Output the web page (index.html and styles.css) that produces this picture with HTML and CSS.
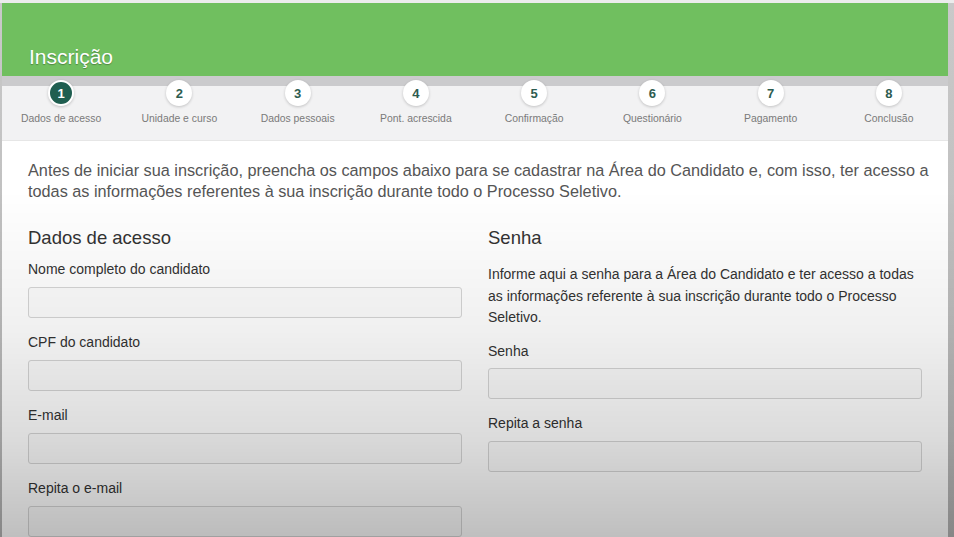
FILE: index.html
```html
<!DOCTYPE html>
<html lang="pt-BR">
<head>
<meta charset="utf-8">
<title>Inscrição</title>
<link rel="stylesheet" href="styles.css">
</head>
<body>
<div class="panel">
  <header class="top">
    <h1 class="title">Inscrição</h1>
  </header>
  <nav class="steps">
    <div class="step active"><span class="dot">1</span><span class="step-label">Dados de acesso</span></div>
    <div class="step"><span class="dot">2</span><span class="step-label">Unidade e curso</span></div>
    <div class="step"><span class="dot">3</span><span class="step-label">Dados pessoais</span></div>
    <div class="step"><span class="dot">4</span><span class="step-label">Pont. acrescida</span></div>
    <div class="step"><span class="dot">5</span><span class="step-label">Confirmação</span></div>
    <div class="step"><span class="dot">6</span><span class="step-label">Questionário</span></div>
    <div class="step"><span class="dot">7</span><span class="step-label">Pagamento</span></div>
    <div class="step"><span class="dot">8</span><span class="step-label">Conclusão</span></div>
  </nav>
  <main class="content">
    <p class="intro">Antes de iniciar sua inscrição, preencha os campos abaixo para se cadastrar na Área do Candidato e, com isso, ter acesso a todas as informações referentes à sua inscrição durante todo o Processo Seletivo.</p>
    <div class="cols">
      <section class="col">
        <h2 class="col-title">Dados de acesso</h2>
        <div class="field"><label class="label">Nome completo do candidato</label><input class="input" type="text"></div>
        <div class="field"><label class="label">CPF do candidato</label><input class="input" type="text"></div>
        <div class="field"><label class="label">E-mail</label><input class="input" type="text"></div>
        <div class="field"><label class="label">Repita o e-mail</label><input class="input" type="text"></div>
      </section>
      <section class="col">
        <h2 class="col-title">Senha</h2>
        <p class="note">Informe aqui a senha para a Área do Candidato e ter acesso a todas as informações referente à sua inscrição durante todo o Processo Seletivo.</p>
        <div class="field"><label class="label">Senha</label><input class="input" type="password"></div>
        <div class="field"><label class="label">Repita a senha</label><input class="input" type="password"></div>
      </section>
    </div>
  </main>
</div>
</body>
</html>
```
FILE: styles.css
```css
html, body {
  margin: 0;
  padding: 0;
}
body {
  background: linear-gradient(to bottom, #ececec 0, #ececec 3px, #c9c9c9 3px, #b4b4b4 100%);
  font-family: "Liberation Sans", Arial, sans-serif;
  height: 537px;
  overflow: hidden;
  padding-top: 3px;
  padding-left: 2px;
  box-sizing: border-box;
}
body::after {
  content: "";
  position: fixed;
  left: 0;
  top: 0;
  width: 100%;
  height: 100%;
  pointer-events: none;
  background: linear-gradient(to bottom, rgba(0,0,0,0) 0, rgba(0,0,0,0) 190px, rgba(0,0,0,0.06) 330px, rgba(0,0,0,0.14) 440px, rgba(0,0,0,0.25) 537px);
}
.panel {
  width: 946px;
  height: 534px;
  overflow: hidden;
  background: #fff;
}
.top {
  height: 73px;
  background: #70bf5f;
  display: flex;
  align-items: flex-end;
  padding-left: 27px;
  box-sizing: border-box;
}
.title {
  margin: 0 0 7px 0;
  color: #fff;
  font-weight: normal;
  font-size: 21px;
  line-height: 24px;
  text-shadow: 0 1px 1px rgba(0,0,0,0.3);
}
.steps {
  display: grid;
  grid-template-columns: repeat(8, 1fr);
  height: 65px;
  box-sizing: border-box;
  padding-top: 4px;
  background: linear-gradient(to bottom, #cbcbcd 0, #cbcbcd 10px, #f2f2f3 10px);
  border-bottom: 1px solid #e6e6e6;
}
.step {
  display: flex;
  flex-direction: column;
  align-items: center;
}
.dot {
  width: 26px;
  height: 26px;
  border-radius: 50%;
  background: #fff;
  box-sizing: border-box;
  box-shadow: 0 1px 3px rgba(0,0,0,0.2);
  display: flex;
  align-items: center;
  justify-content: center;
  font-size: 13px;
  font-weight: bold;
  color: #2d5c50;
}
.step.active .dot {
  background: #1f5e50;
  color: #fff;
  border: 2px solid #fff;
}
.step-label {
  margin-top: 7px;
  font-size: 10.4px;
  line-height: 12px;
  color: #7a7a7a;
  white-space: nowrap;
}
.content {
  padding: 19px 26px 0 26px;
}
.intro {
  margin: 0 -14px 0 0;
  font-size: 16.25px;
  line-height: 21px;
  color: #555;
}
.cols {
  display: grid;
  grid-template-columns: 1fr 1fr;
  column-gap: 26px;
  margin-top: 24px;
}
.col-title {
  margin: 0;
  font-size: 18.5px;
  line-height: 24px;
  font-weight: normal;
  color: #333;
}
.col .col-title + .field {
  margin-top: 10px;
}
.field {
  display: flex;
  flex-direction: column;
  margin-bottom: 15px;
}
.label {
  font-size: 14px;
  line-height: 18px;
  color: #333;
  margin-bottom: 9px;
}
.input {
  height: 31px;
  box-sizing: border-box;
  border: 1px solid #d6d6d6;
  border-radius: 3px;
  background: #fcfcfc;
  margin: 0;
  padding: 0 8px;
  font: inherit;
}
.note {
  margin: 14px 0 13px 0;
  font-size: 14px;
  line-height: 21.5px;
  color: #333;
}
.note + .field .label {
  margin-bottom: 8px;
}
```
